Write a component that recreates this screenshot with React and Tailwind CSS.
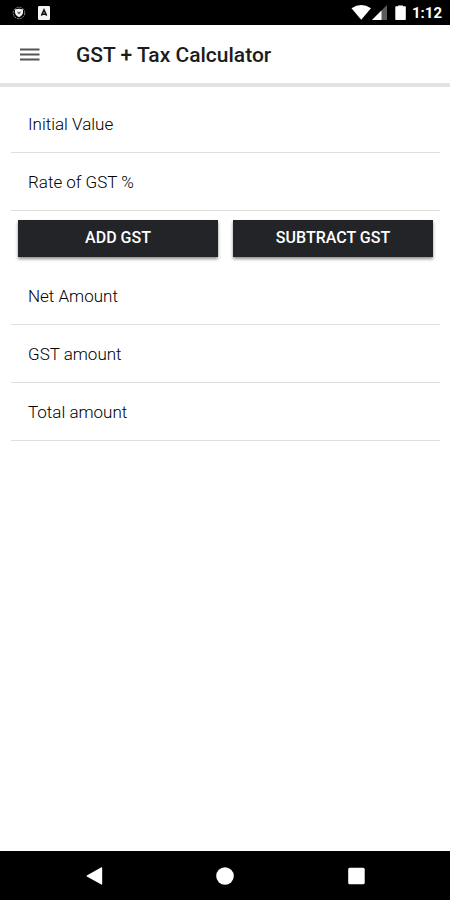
import { useState } from 'react';

function StatusBar() {
  return (
    <div className="flex h-[25px] items-center justify-between bg-black pl-3 pr-2 text-white">
      <div className="flex items-center gap-3">
        <svg className="h-[14px] w-[14px]" viewBox="0 0 14 14">
          <circle cx="7" cy="7" r="5.8" fill="none" stroke="#8c8c8c" strokeWidth="1" strokeDasharray="2.2 0.8" />
          <path d="M3 3.4 Q7 2.2 11 3.4 V6.6 Q10.6 9.6 7 11.2 Q3.4 9.6 3 6.6 Z" fill="#f2f2f2" />
          <path d="M5.2 5.2 L7 6.2 L8.8 5.2 L8.2 7.2 L7 8.2 L5.8 7.2 Z" fill="#555" />
        </svg>
        <svg className="h-[14px] w-[12px]" viewBox="0 0 12 14">
          <rect width="12" height="14" rx="1.2" fill="#f5f5f5" />
          <path d="M3.4 9.6 L6 4 L8.6 9.6 M4.3 8.2 H7.7" fill="none" stroke="#111" strokeWidth="1.6" />
        </svg>
      </div>
      <div className="flex items-center">
        <svg className="h-[15px] w-[21px]" viewBox="0 0 21 15">
          <path d="M0.5 3.2 Q10.2 -3 20 3.2 L10.2 14.8 Z" fill="#fff" />
        </svg>
        <svg className="h-[15px] w-[15px]" viewBox="0 0 15 15">
          <path d="M0 15 L15 0 V15 Z" fill="#5c5c5c" />
          <path d="M0 15 L9.5 5.5 V15 Z" fill="#fff" />
        </svg>
        <svg className="ml-2 h-[15px] w-[11px]" viewBox="0 0 11 15">
          <path d="M3 0.4 H8 V1.2 H10.2 Q10.8 1.2 10.8 2 V14.2 Q10.8 15 10 15 H1 Q0.3 15 0.3 14.2 V2 Q0.3 1.2 1 1.2 H3 Z" fill="#fff" />
        </svg>
        <span className="ml-1.5 text-[15px] font-bold leading-6">1:12</span>
      </div>
    </div>
  );
}

function Field({ id, label, value, onChange, readOnly }) {
  return (
    <div className="flex h-[58px] items-center border-b border-[#dedede] px-[17px]">
      <label htmlFor={id} className="text-[17px] font-light leading-6 text-black">{label}</label>
      <input
        id={id}
        type="text"
        inputMode="decimal"
        className="ml-4 min-w-0 flex-1 bg-transparent text-[17px] font-light leading-6 text-black outline-none"
        value={value}
        readOnly={readOnly}
        onChange={onChange ? (e) => onChange(e.target.value) : undefined}
      />
    </div>
  );
}

const buttonClass = 'h-[37px] flex-1 bg-[#222428] text-base font-medium text-white shadow-[0_2px_3px_rgba(0,0,0,0.45)]';

export default function App() {
  const [initial, setInitial] = useState('');
  const [rate, setRate] = useState('');
  const [result, setResult] = useState({ net: '', gst: '', total: '' });

  const calculate = (subtract) => {
    const amount = parseFloat(initial);
    const percent = parseFloat(rate);
    if (Number.isNaN(amount) || Number.isNaN(percent)) return;
    const net = subtract ? amount / (1 + percent / 100) : amount;
    const gst = (net * percent) / 100;
    setResult({ net: net.toFixed(2), gst: gst.toFixed(2), total: (net + gst).toFixed(2) });
  };

  return (
    <div className="flex min-h-screen flex-col bg-white font-['Roboto',sans-serif]">
      <StatusBar />
      <header className="flex h-[62px] items-center border-b-4 border-[#e2e2e2] px-5 pt-0.5">
        <button type="button" aria-label="Menu">
          <svg className="h-5 w-5" viewBox="0 0 20 20" stroke="#555" strokeWidth="1.8">
            <path d="M0 4.5 H19.5 M0 9.5 H19.5 M0 14.5 H19.5" />
          </svg>
        </button>
        <h1 className="ml-9 text-[21px] font-medium leading-7 text-[#1c1c1c]">GST + Tax Calculator</h1>
      </header>

      <main className="flex-1 pl-[11px] pr-2.5 pt-2">
        <Field id="initial" label="Initial Value" value={initial} onChange={setInitial} />
        <Field id="rate" label="Rate of GST %" value={rate} onChange={setRate} />
        <div className="flex h-14 items-center gap-[15px] px-[7px] pb-0.5">
          <button type="button" className={buttonClass} onClick={() => calculate(false)}>ADD GST</button>
          <button type="button" className={buttonClass} onClick={() => calculate(true)}>SUBTRACT GST</button>
        </div>
        <Field id="net" label="Net Amount" value={result.net} readOnly />
        <Field id="gst" label="GST amount" value={result.gst} readOnly />
        <Field id="total" label="Total amount" value={result.total} readOnly />
      </main>

      <nav className="flex h-[49px] items-center justify-center gap-[113px] bg-black">
        <button type="button" aria-label="Back">
          <svg className="h-[18px] w-[18px]" viewBox="0 0 18 18">
            <path d="M1.8 8.4 L16.4 0.3 Q17.2 0.2 17.2 1 V17 Q17.2 17.8 16.4 17.6 L1.8 9.6 Q1.2 9 1.8 8.4 Z" fill="#fff" />
          </svg>
        </button>
        <button type="button" aria-label="Home">
          <svg className="h-[18px] w-[18px]" viewBox="0 0 18 18">
            <circle cx="9" cy="9" r="8.8" fill="#fff" />
          </svg>
        </button>
        <button type="button" aria-label="Recent apps">
          <svg className="h-[18px] w-[18px]" viewBox="0 0 18 18">
            <rect x="1.2" y="0.8" width="16.5" height="16.5" rx="1.5" fill="#fff" />
          </svg>
        </button>
      </nav>
    </div>
  );
}
